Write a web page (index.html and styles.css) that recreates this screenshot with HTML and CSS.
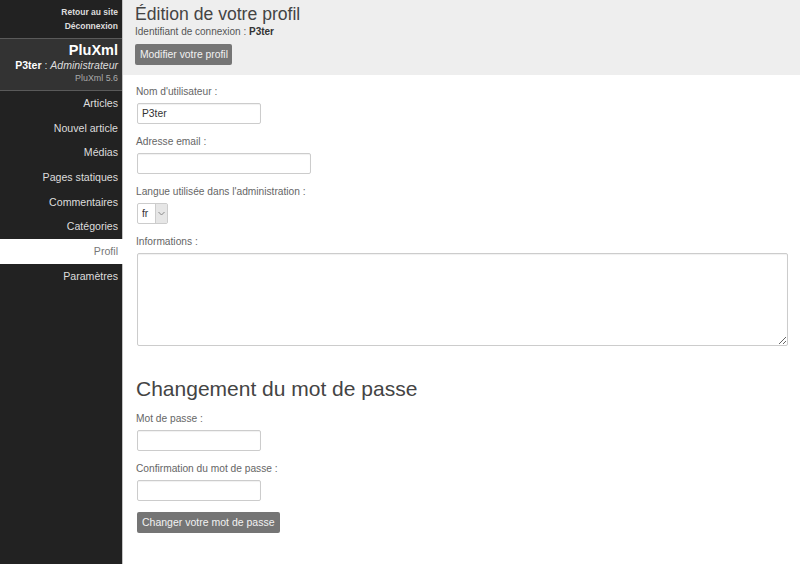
FILE: index.html
```html
<!DOCTYPE html>
<html lang="fr">
<head>
<meta charset="utf-8">
<title>Édition de votre profil</title>
<link rel="stylesheet" href="styles.css">
</head>
<body>
<div class="app">
  <aside class="sidebar">
    <div class="toplinks">
      <a href="#">Retour au site</a>
      <a href="#">Déconnexion</a>
    </div>
    <div class="brand">
      <div class="brand-name">PluXml</div>
      <div class="brand-user"><strong>P3ter</strong> : <em>Administrateur</em></div>
      <div class="brand-version">PluXml 5.6</div>
    </div>
    <nav class="menu">
      <a href="#" class="menu-item">Articles</a>
      <a href="#" class="menu-item">Nouvel article</a>
      <a href="#" class="menu-item">Médias</a>
      <a href="#" class="menu-item">Pages statiques</a>
      <a href="#" class="menu-item">Commentaires</a>
      <a href="#" class="menu-item">Catégories</a>
      <a href="#" class="menu-item active">Profil</a>
      <a href="#" class="menu-item">Paramètres</a>
    </nav>
  </aside>
  <main class="main">
    <header class="page-head">
      <h1 class="page-title">Édition de votre profil</h1>
      <p class="page-sub">Identifiant de connexion : <strong>P3ter</strong></p>
      <button class="btn" type="button">Modifier votre profil</button>
    </header>
    <section class="content">
      <div class="field">
        <label class="label">Nom d'utilisateur :</label>
        <input class="input input-s" type="text" value="P3ter">
      </div>
      <div class="field">
        <label class="label">Adresse email :</label>
        <input class="input input-m" type="text">
      </div>
      <div class="field">
        <label class="label">Langue utilisée dans l'administration :</label>
        <span class="select-wrap">
          <select class="select"><option>fr</option></select>
          <span class="select-arrow"><svg width="7" height="5" viewBox="0 0 7 5"><path d="M0.5 1 L3.5 4 L6.5 1" fill="none" stroke="#888" stroke-width="1"/></svg></span>
        </span>
      </div>
      <div class="field">
        <label class="label">Informations :</label>
        <textarea class="textarea"></textarea>
      </div>
      <h2 class="section-title">Changement du mot de passe</h2>
      <div class="field">
        <label class="label">Mot de passe :</label>
        <input class="input input-s" type="password">
      </div>
      <div class="field field-last">
        <label class="label">Confirmation du mot de passe :</label>
        <input class="input input-s" type="password">
      </div>
      <button class="btn btn-wide" type="button">Changer votre mot de passe</button>
    </section>
  </main>
</div>
</body>
</html>
```
FILE: styles.css
```css
* { box-sizing: border-box; }
html, body { margin: 0; padding: 0; height: 100%; }
body {
  font-family: "Liberation Sans", Arial, sans-serif;
  background: #fff;
  color: #444;
}
.app {
  display: flex;
  min-height: 564px;
  height: 100%;
}
.sidebar {
  width: 122px;
  flex: 0 0 122px;
  background: #222;
  display: flex;
  flex-direction: column;
}
.toplinks {
  display: flex;
  flex-direction: column;
  align-items: flex-end;
  padding: 5px 4px 5px 0;
}
.toplinks a {
  color: #ddd;
  text-decoration: none;
  font-size: 8.5px;
  font-weight: bold;
  line-height: 14px;
}
.brand {
  background: #333;
  border-top: 1px solid #5a5a5a;
  border-bottom: 1px solid #5a5a5a;
  text-align: right;
  padding: 3px 4px 6px 0;
}
.brand-name {
  color: #fff;
  font-weight: bold;
  font-size: 14.5px;
  line-height: 16px;
}
.brand-user {
  color: #ddd;
  font-size: 10.5px;
  line-height: 14px;
}
.brand-user strong { color: #fff; }
.brand-version {
  color: #aaa;
  font-size: 8.9px;
  line-height: 12px;
}
.menu {
  display: flex;
  flex-direction: column;
}
.menu-item {
  display: block;
  text-align: right;
  padding-right: 4px;
  height: 24.7px;
  line-height: 24.7px;
  color: #ddd;
  font-size: 10.6px;
  text-decoration: none;
}
.menu-item.active {
  background: #fff;
  color: #777;
  margin-right: -1px;
  padding-right: 5px;
  position: relative;
  z-index: 1;
}
.main {
  flex: 1;
  border-left: 1px solid #c4c4c4;
  display: flex;
  flex-direction: column;
}
.page-head {
  background: #eee;
  padding: 4px 12px 10px 12px;
}
.page-title {
  margin: 0;
  font-weight: normal;
  font-size: 17.6px;
  line-height: 20px;
  color: #444;
}
.page-sub {
  margin: 2px 0 0 0;
  font-size: 10px;
  line-height: 12px;
  color: #555;
}
.page-sub strong { color: #333; }
.btn {
  display: inline-block;
  margin-top: 6px;
  height: 21px;
  padding: 0 4px 0 5px;
  background: #757575;
  color: #f2f2f2;
  border: none;
  border-radius: 2px;
  font-family: "Liberation Sans", Arial, sans-serif;
  font-size: 10.35px;
  line-height: 21px;
  cursor: pointer;
}
.btn-wide {
  margin-top: 0;
  padding: 0 5px;
  font-size: 10.5px;
}
.content {
  padding: 11px 12px 0 14px;
}
.field {
  display: flex;
  flex-direction: column;
  align-items: flex-start;
  margin-bottom: 12px;
}
.field-last { margin-bottom: 11px; }
.label {
  font-size: 10.2px;
  line-height: 12px;
  color: #666;
  margin-bottom: 5px;
  margin-left: -1px;
}
.input {
  height: 21px;
  border: 1px solid #ccc;
  border-radius: 2px;
  box-shadow: inset 0 1px 1px rgba(0,0,0,0.06);
  padding: 0 4px;
  font-family: "Liberation Sans", Arial, sans-serif;
  font-size: 10.3px;
  color: #333;
  background: #fff;
}
.input-s { width: 124px; }
.input-m { width: 174px; }
.select-wrap {
  display: inline-flex;
  height: 21px;
  border: 1px solid #ccc;
  border-radius: 2px;
  background: #fff;
}
.select {
  appearance: none;
  -webkit-appearance: none;
  border: none;
  background: transparent;
  width: 17px;
  height: 19px;
  padding: 0 0 0 4px;
  font-family: "Liberation Sans", Arial, sans-serif;
  font-size: 10.3px;
  color: #333;
}
.select-arrow {
  width: 12px;
  height: 19px;
  margin: 0 0 0 0;
  background: #e6e6e6;
  border-left: 1px solid #ccc;
  display: flex;
  align-items: center;
  justify-content: center;
}
.textarea {
  width: 100%;
  height: 93px;
  border: 1px solid #ccc;
  border-radius: 2px;
  box-shadow: inset 0 1px 1px rgba(0,0,0,0.06);
  resize: vertical;
  font-family: "Liberation Sans", Arial, sans-serif;
  font-size: 10.3px;
}
.section-title {
  margin: 30px 0 11px -1px;
  font-weight: normal;
  font-size: 21px;
  line-height: 26px;
  color: #444;
}
```
